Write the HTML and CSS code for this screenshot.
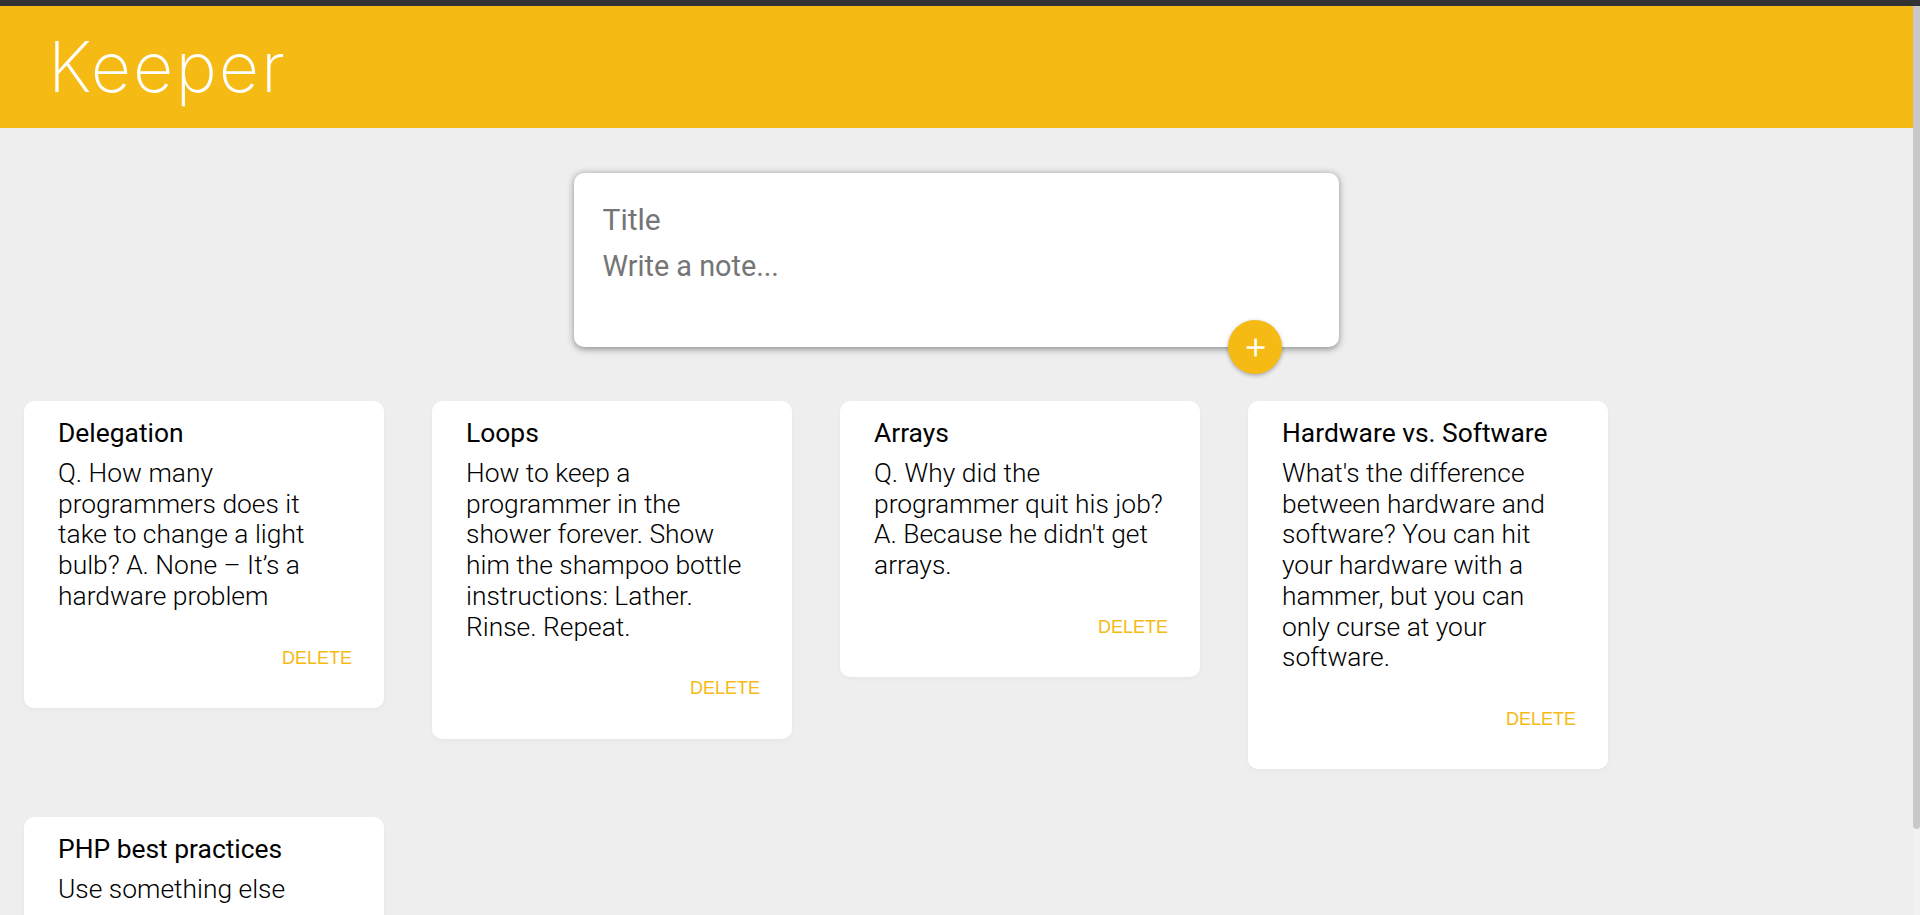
FILE: index.html
```html
<!DOCTYPE html>
<html lang="en">
<head>
<meta charset="utf-8">
<title>Keeper</title>
<link rel="stylesheet" href="styles.css">
</head>
<body>
<div class="topbar"></div>
<div class="viewport">
  <div class="scroller">
    <header class="header">
      <h1 class="logo">Keeper</h1>
    </header>
    <main class="main">
      <form class="create-note">
        <input class="create-title" name="title" placeholder="Title" autocomplete="off">
        <textarea class="create-content" name="content" placeholder="Write a note..."></textarea>
        <button type="button" class="add-btn" aria-label="Add note">
          <svg class="add-icon" viewBox="0 0 24 24" width="31" height="31"><path d="M19 13h-6v6h-2v-6H5v-2h6V5h2v6h6v2z" fill="#fff"/></svg>
        </button>
      </form>
      <div class="notes">
        <div class="note">
          <h2 class="note-title">Delegation</h2>
          <p class="note-text">Q. How many programmers does it take to change a light bulb? A. None – It’s a hardware problem</p>
          <div class="note-actions"><button type="button" class="delete-btn">DELETE</button></div>
        </div>
        <div class="note">
          <h2 class="note-title">Loops</h2>
          <p class="note-text">How to keep a programmer in the shower forever. Show him the shampoo bottle instructions: Lather. Rinse. Repeat.</p>
          <div class="note-actions"><button type="button" class="delete-btn">DELETE</button></div>
        </div>
        <div class="note">
          <h2 class="note-title">Arrays</h2>
          <p class="note-text">Q. Why did the programmer quit his job? A. Because he didn't get arrays.</p>
          <div class="note-actions"><button type="button" class="delete-btn">DELETE</button></div>
        </div>
        <div class="note">
          <h2 class="note-title">Hardware vs. Software</h2>
          <p class="note-text">What's the difference between hardware and software? You can hit your hardware with a hammer, but you can only curse at your software.</p>
          <div class="note-actions"><button type="button" class="delete-btn">DELETE</button></div>
        </div>
        <div class="note">
          <h2 class="note-title">PHP best practices</h2>
          <p class="note-text">Use something else</p>
          <div class="note-actions"><button type="button" class="delete-btn">DELETE</button></div>
        </div>
      </div>
    </main>
  </div>
  <div class="scrolltrack" aria-hidden="true"><div class="scrollthumb"></div></div>
</div>
</body>
</html>
```
FILE: styles.css
```css
* {
  box-sizing: border-box;
}

html,
body {
  margin: 0;
  padding: 0;
  height: 100%;
}

body {
  display: flex;
  flex-direction: column;
  overflow: hidden;
  background: #eeeeee;
  font-family: Roboto, "Liberation Sans", sans-serif;
  color: #000;
}

.topbar {
  flex: none;
  height: 6px;
  background: #333335;
}

.viewport {
  flex: 1;
  min-height: 0;
  display: flex;
}

.scroller {
  flex: 1;
  min-width: 0;
  overflow-y: auto;
  scrollbar-width: none;
}

.scroller::-webkit-scrollbar {
  display: none;
}

.scrolltrack {
  flex: none;
  width: 7px;
  background: #f1f1f1;
}

.scrollthumb {
  height: 823px;
  background: #c8c8c8;
  border-radius: 0 0 4px 4px;
}

.header {
  background: #f5ba13;
  padding: 24px 48px;
}

.logo {
  margin: 0;
  font-family: Inter, "Noto Sans", sans-serif;
  font-weight: 200;
  font-size: 70px;
  line-height: 74px;
  letter-spacing: 2px;
  color: #fff;
}

.main {
  padding-top: 45px;
}

.create-note {
  position: relative;
  width: 765px;
  margin: 0 auto;
  padding: 22.5px;
  background: #fff;
  border-radius: 10px;
  box-shadow: 0 1.5px 7.5px rgb(138, 137, 137);
}

.create-title,
.create-content {
  display: block;
  width: 100%;
  border: none;
  outline: none;
  padding: 6px;
  margin: 0;
  font-family: inherit;
  color: #000;
  background: transparent;
  resize: none;
}

.create-title {
  font-size: 30px;
  font-weight: 400;
  height: 47px;
}

.create-content {
  font-size: 28.8px;
  font-weight: 400;
  height: 82px;
  overflow: hidden;
}

.create-title::placeholder,
.create-content::placeholder {
  color: #757575;
}

.add-btn {
  position: absolute;
  right: 57px;
  bottom: -27px;
  width: 54px;
  height: 54px;
  padding: 0;
  border: none;
  border-radius: 50%;
  background: #f5ba13;
  box-shadow: 0 1.5px 4.5px rgba(0, 0, 0, 0.3);
  display: flex;
  align-items: center;
  justify-content: center;
  cursor: pointer;
}

.add-icon {
  display: block;
}

.notes {
  display: flex;
  flex-wrap: wrap;
  align-items: flex-start;
  margin-top: 30px;
}

.note {
  width: 360px;
  margin: 24px;
  padding: 17px 30px 23px 34px;
  background: #fff;
  border-radius: 10px;
  box-shadow: 0 2px 5px rgba(0, 0, 0, 0.03);
}

.note-title {
  margin: 0 0 9px;
  font-size: 26.4px;
  line-height: 31px;
  font-weight: 400;
}

.note-text {
  margin: 0;
  font-size: 26.4px;
  line-height: 30.7px;
  font-weight: 300;
}

.note-actions {
  display: flex;
  justify-content: flex-end;
  margin-top: 19.5px;
}

.delete-btn {
  height: 54px;
  padding: 0 2px;
  border: none;
  background: none;
  color: #f5ba13;
  font-family: "Liberation Sans", Arial, sans-serif;
  font-size: 18px;
  cursor: pointer;
}
```
